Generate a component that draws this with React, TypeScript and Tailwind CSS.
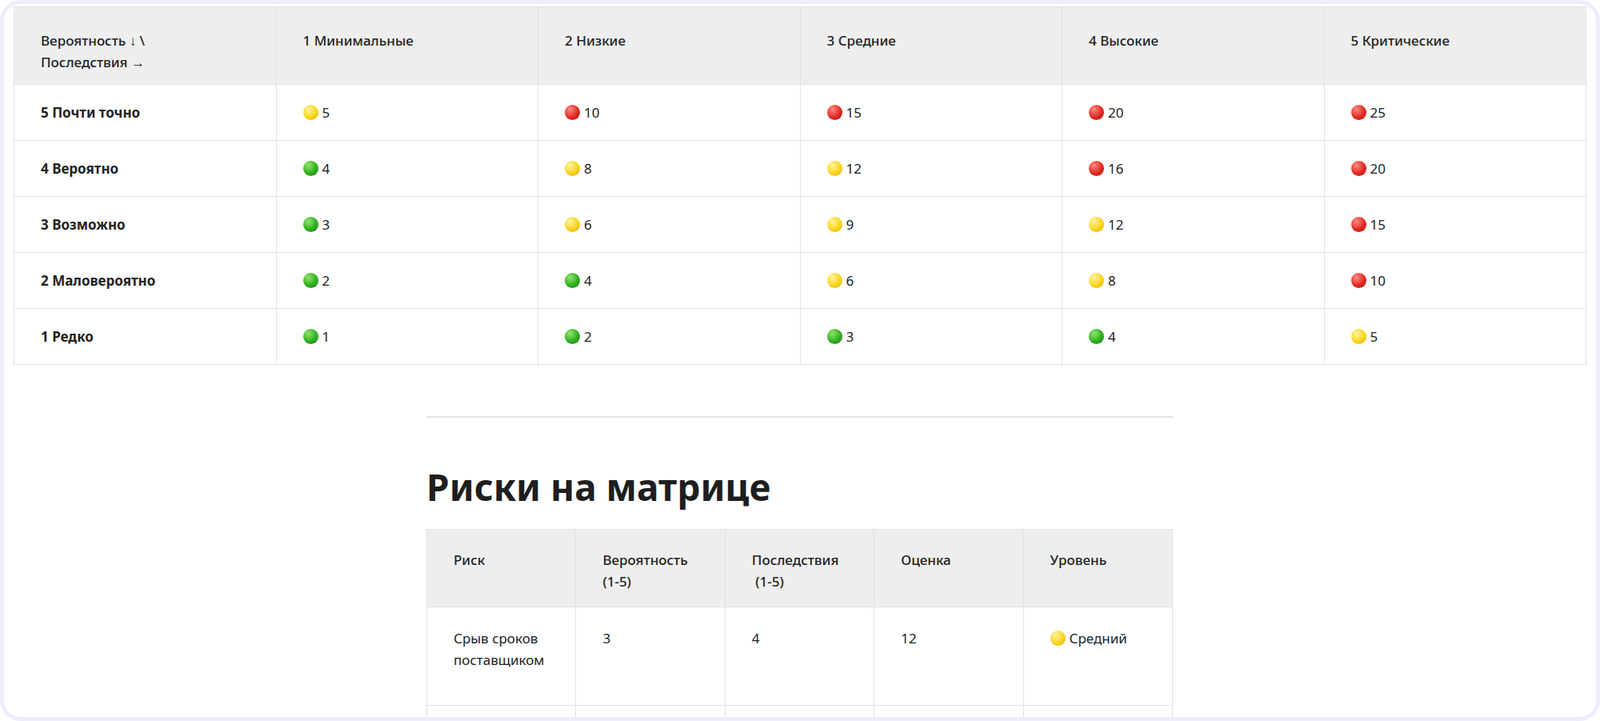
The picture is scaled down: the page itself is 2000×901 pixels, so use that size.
import React from "react";

type Lvl = "g" | "y" | "r";

const Dot: React.FC<{ c: Lvl }> = ({ c }) => {
  const bg =
    c === "g"
      ? "bg-[radial-gradient(circle_at_35%_30%,#8ee66b,#2fae1f_55%,#1c7a14)]"
      : c === "y"
      ? "bg-[radial-gradient(circle_at_35%_30%,#fff3a0,#fbd51d_55%,#e0a800)]"
      : "bg-[radial-gradient(circle_at_35%_30%,#ff8a80,#e02a22_55%,#a3120e)]";
  return <span className={`inline-block w-[19px] h-[19px] rounded-full mr-[5px] align-[-3px] ${bg}`} />;
};

const heads = ["1 Минимальные", "2 Низкие", "3 Средние", "4 Высокие", "5 Критические"];

const rows: { label: string; cells: [Lvl, number][] }[] = [
  { label: "5 Почти точно", cells: [["y", 5], ["r", 10], ["r", 15], ["r", 20], ["r", 25]] },
  { label: "4 Вероятно", cells: [["g", 4], ["y", 8], ["y", 12], ["r", 16], ["r", 20]] },
  { label: "3 Возможно", cells: [["g", 3], ["y", 6], ["y", 9], ["y", 12], ["r", 15]] },
  { label: "2 Маловероятно", cells: [["g", 2], ["g", 4], ["y", 6], ["y", 8], ["r", 10]] },
  { label: "1 Редко", cells: [["g", 1], ["g", 2], ["g", 3], ["g", 4], ["y", 5]] },
];

export default function App() {
  return (
    <div className="h-[901px] w-[2000px] bg-white">
      <div className="h-full border-[5px] border-[#f1ecfd] rounded-[26px] overflow-hidden pt-[3px] px-[12px] text-[17px] text-[#222] font-['Roboto',sans-serif]">
        {/* Matrix */}
        <table className="w-full table-fixed border-collapse">
          <thead>
            <tr className="bg-[#eeeeee] h-[97px]">
              <th className="align-top text-left font-medium px-[33px] pt-[28px] leading-[27px] border border-[#e2e2e2]">
                Вероятность ↓ \<br />Последствия →
              </th>
              {heads.map((h) => (
                <th key={h} className="align-top text-left font-medium px-[33px] pt-[28px] leading-[27px] border border-[#e2e2e2]">
                  {h}
                </th>
              ))}
            </tr>
          </thead>
          <tbody>
            {rows.map((r) => (
              <tr key={r.label} className="h-[70px]">
                <td className="px-[33px] font-bold border border-[#e2e2e2]">{r.label}</td>
                {r.cells.map(([c, n], i) => (
                  <td key={i} className="px-[33px] border border-[#e2e2e2]">
                    <Dot c={c} />
                    {n}
                  </td>
                ))}
              </tr>
            ))}
          </tbody>
        </table>

        {/* Risks */}
        <div className="w-[933px] ml-[516px]">
          <hr className="mt-[64px] border-0 h-[2px] bg-[#e4e4e4]" />
          <h2 className="mt-[58px] text-[46px] font-bold leading-[56px] text-[#1e1e1e]">Риски на матрице</h2>
          <table className="mt-[25px] w-full table-fixed border-collapse">
            <thead>
              <tr className="bg-[#eeeeee] h-[97px]">
                {["Риск", "Вероятность (1-5)", "Последствия\u00a0 (1-5)", "Оценка", "Уровень"].map((h) => (
                  <th key={h} className="align-top text-left font-medium px-[33px] pt-[24px] leading-[27px] border border-[#e2e2e2]">
                    {h === "Последствия\u00a0 (1-5)" ? (
                      <>
                        Последствия
                        <br />
                        &nbsp;(1-5)
                      </>
                    ) : h === "Вероятность (1-5)" ? (
                      <>
                        Вероятность
                        <br />
                        (1-5)
                      </>
                    ) : (
                      h
                    )}
                  </th>
                ))}
              </tr>
            </thead>
            <tbody>
              <tr className="h-[123px]">
                <td className="align-top px-[33px] pt-[25px] leading-[27px] border border-[#e2e2e2] break-all">
                  Срыв сроков поставщиком
                </td>
                <td className="align-top px-[33px] pt-[25px] leading-[27px] border border-[#e2e2e2]">3</td>
                <td className="align-top px-[33px] pt-[25px] leading-[27px] border border-[#e2e2e2]">4</td>
                <td className="align-top px-[33px] pt-[25px] leading-[27px] border border-[#e2e2e2]">12</td>
                <td className="align-top px-[33px] pt-[25px] leading-[27px] border border-[#e2e2e2]">
                  <Dot c="y" />
                  Средний
                </td>
              </tr>
              <tr className="h-[60px]">
                {[0, 1, 2, 3, 4].map((i) => (
                  <td key={i} className="border border-[#e2e2e2]" />
                ))}
              </tr>
            </tbody>
          </table>
        </div>
      </div>
    </div>
  );
}
